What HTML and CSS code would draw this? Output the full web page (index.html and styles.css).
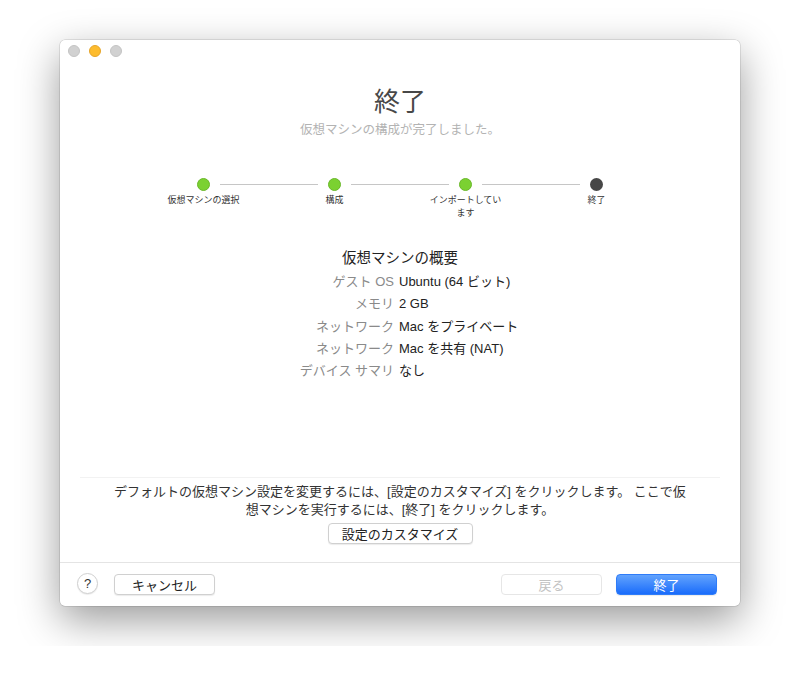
FILE: index.html
```html
<!DOCTYPE html>
<html lang="ja">
<head>
    <meta charset="UTF-8">
    <meta name="viewport" content="width=device-width, initial-scale=1.0">
    <title>終了</title>
    <link rel="stylesheet" href="styles.css">
</head>
<body>
    <div class="window">
        <div class="titlebar">
            <span class="light"></span>
            <span class="light light-min"></span>
            <span class="light"></span>
        </div>

        <div class="header">
            <h1>終了</h1>
            <p class="subtitle">仮想マシンの構成が完了しました。</p>
        </div>

        <div class="steps">
            <div class="step-track">
                <span class="dot done"></span>
                <span class="track-line"></span>
                <span class="dot done"></span>
                <span class="track-line"></span>
                <span class="dot done"></span>
                <span class="track-line"></span>
                <span class="dot current"></span>
            </div>
            <div class="step-labels">
                <span>仮想マシンの選択</span>
                <span>構成</span>
                <span>インポートしています</span>
                <span>終了</span>
            </div>
        </div>

        <div class="summary">
            <h2>仮想マシンの概要</h2>
            <dl class="summary-table">
                <dt>ゲスト OS</dt><dd>Ubuntu (64 ビット)</dd>
                <dt>メモリ</dt><dd>2 GB</dd>
                <dt>ネットワーク</dt><dd>Mac をプライベート</dd>
                <dt>ネットワーク</dt><dd>Mac を共有 (NAT)</dd>
                <dt>デバイス サマリ</dt><dd>なし</dd>
            </dl>
        </div>

        <div class="spacer"></div>

        <div class="customize">
            <p class="hint">デフォルトの仮想マシン設定を変更するには、[設定のカスタマイズ] をクリックします。 ここで仮想マシンを実行するには、[終了] をクリックします。</p>
            <button class="btn btn-customize">設定のカスタマイズ</button>
        </div>

        <div class="footer">
            <button class="help-btn">?</button>
            <button class="btn btn-footer">キャンセル</button>
            <div class="spacer"></div>
            <button class="btn btn-footer" disabled>戻る</button>
            <button class="btn btn-footer btn-primary">終了</button>
        </div>
    </div>
</body>
</html>
```

FILE: styles.css
```css
* {
    margin: 0;
    padding: 0;
    box-sizing: border-box;
}

body {
    font-family: "Liberation Sans", "Noto Sans CJK JP", sans-serif;
    background: #fff;
    color: #222;
    padding: 40px 60px;
}

.window {
    width: 680px;
    height: 566px;
    background: #fff;
    border-radius: 5px;
    box-shadow: 0 14px 42px rgba(0,0,0,0.4), 0 0 0 0.5px rgba(0,0,0,0.18);
    display: flex;
    flex-direction: column;
}

.titlebar {
    height: 22px;
    padding-left: 8px;
    display: flex;
    align-items: center;
    gap: 9px;
}

.light {
    width: 12px;
    height: 12px;
    border-radius: 50%;
    background: #d1d1d1;
    border: 0.5px solid #c4c4c4;
}

.light-min {
    background: #fdbc2e;
    border-color: #e6a52a;
}

.header {
    margin-top: 24px;
    text-align: center;
}

h1 {
    font-size: 26px;
    line-height: 32px;
    font-weight: 400;
    color: #484848;
}

.subtitle {
    margin-top: 3px;
    font-size: 12.5px;
    line-height: 18px;
    color: #b3b3b3;
}

.steps {
    margin-top: 39px;
}

.step-track {
    display: flex;
    justify-content: center;
    align-items: center;
}

.dot {
    width: 13px;
    height: 13px;
    border-radius: 50%;
}

.dot.done {
    background: #7bd131;
    border: 0.5px solid #6ab82a;
}

.dot.current {
    background: #474747;
}

.track-line {
    width: 98px;
    height: 1px;
    margin: 0 10px;
    background: #c6c6c6;
}

.step-labels {
    margin-top: 3px;
    display: grid;
    grid-template-columns: repeat(4, 131px);
    justify-content: center;
    justify-items: center;
}

.step-labels span {
    width: 76px;
    font-size: 9px;
    line-height: 13px;
    text-align: center;
    color: #333;
}

.summary {
    margin-top: 26px;
}

h2 {
    font-size: 14.5px;
    line-height: 25px;
    font-weight: 400;
    text-align: center;
    color: #222;
}

.summary-table {
    display: grid;
    grid-template-columns: 334px 1fr;
    column-gap: 5px;
    font-size: 13px;
    line-height: 22.25px;
}

.summary-table dt {
    text-align: right;
    color: #8a8a8a;
}

.summary-table dd {
    color: #222;
}

.spacer {
    flex: 1;
}

.customize {
    margin: 0 20px;
    border-top: 1px solid #f2f2f2;
    padding-top: 5px;
    text-align: center;
}

.hint {
    max-width: 580px;
    margin: 0 auto;
    font-size: 13px;
    line-height: 18px;
    color: #333;
}

.btn {
    font-family: inherit;
    font-size: 13px;
    background: #fff;
    color: #222;
    border: 1px solid #d0d0d0;
    border-radius: 4px;
    box-shadow: 0 1px 1px rgba(0,0,0,0.08);
    cursor: pointer;
}

.btn-customize {
    margin-top: 4px;
    width: 145px;
    height: 21px;
}

.footer {
    margin-top: 18px;
    height: 44px;
    border-top: 1px solid #e4e4e4;
    padding: 0 23px 0 17px;
    display: flex;
    align-items: center;
}

.help-btn {
    width: 21px;
    height: 21px;
    border-radius: 50%;
    border: 1px solid #d0d0d0;
    background: #fff;
    box-shadow: 0 1px 1px rgba(0,0,0,0.08);
    font-family: inherit;
    font-size: 13px;
    color: #333;
    margin-right: 16px;
    margin-top: -2px;
}

.btn-footer {
    width: 101px;
    height: 21px;
}

.btn-footer:disabled {
    color: #c2c2c2;
    border-color: #e6e6e6;
    box-shadow: none;
    cursor: default;
}

.btn-footer + .btn-footer {
    margin-left: 14px;
}

.btn-primary {
    background: linear-gradient(#62a3fd, #1a6cfb);
    border-color: #2f7cf8;
    color: #fff;
}
```
